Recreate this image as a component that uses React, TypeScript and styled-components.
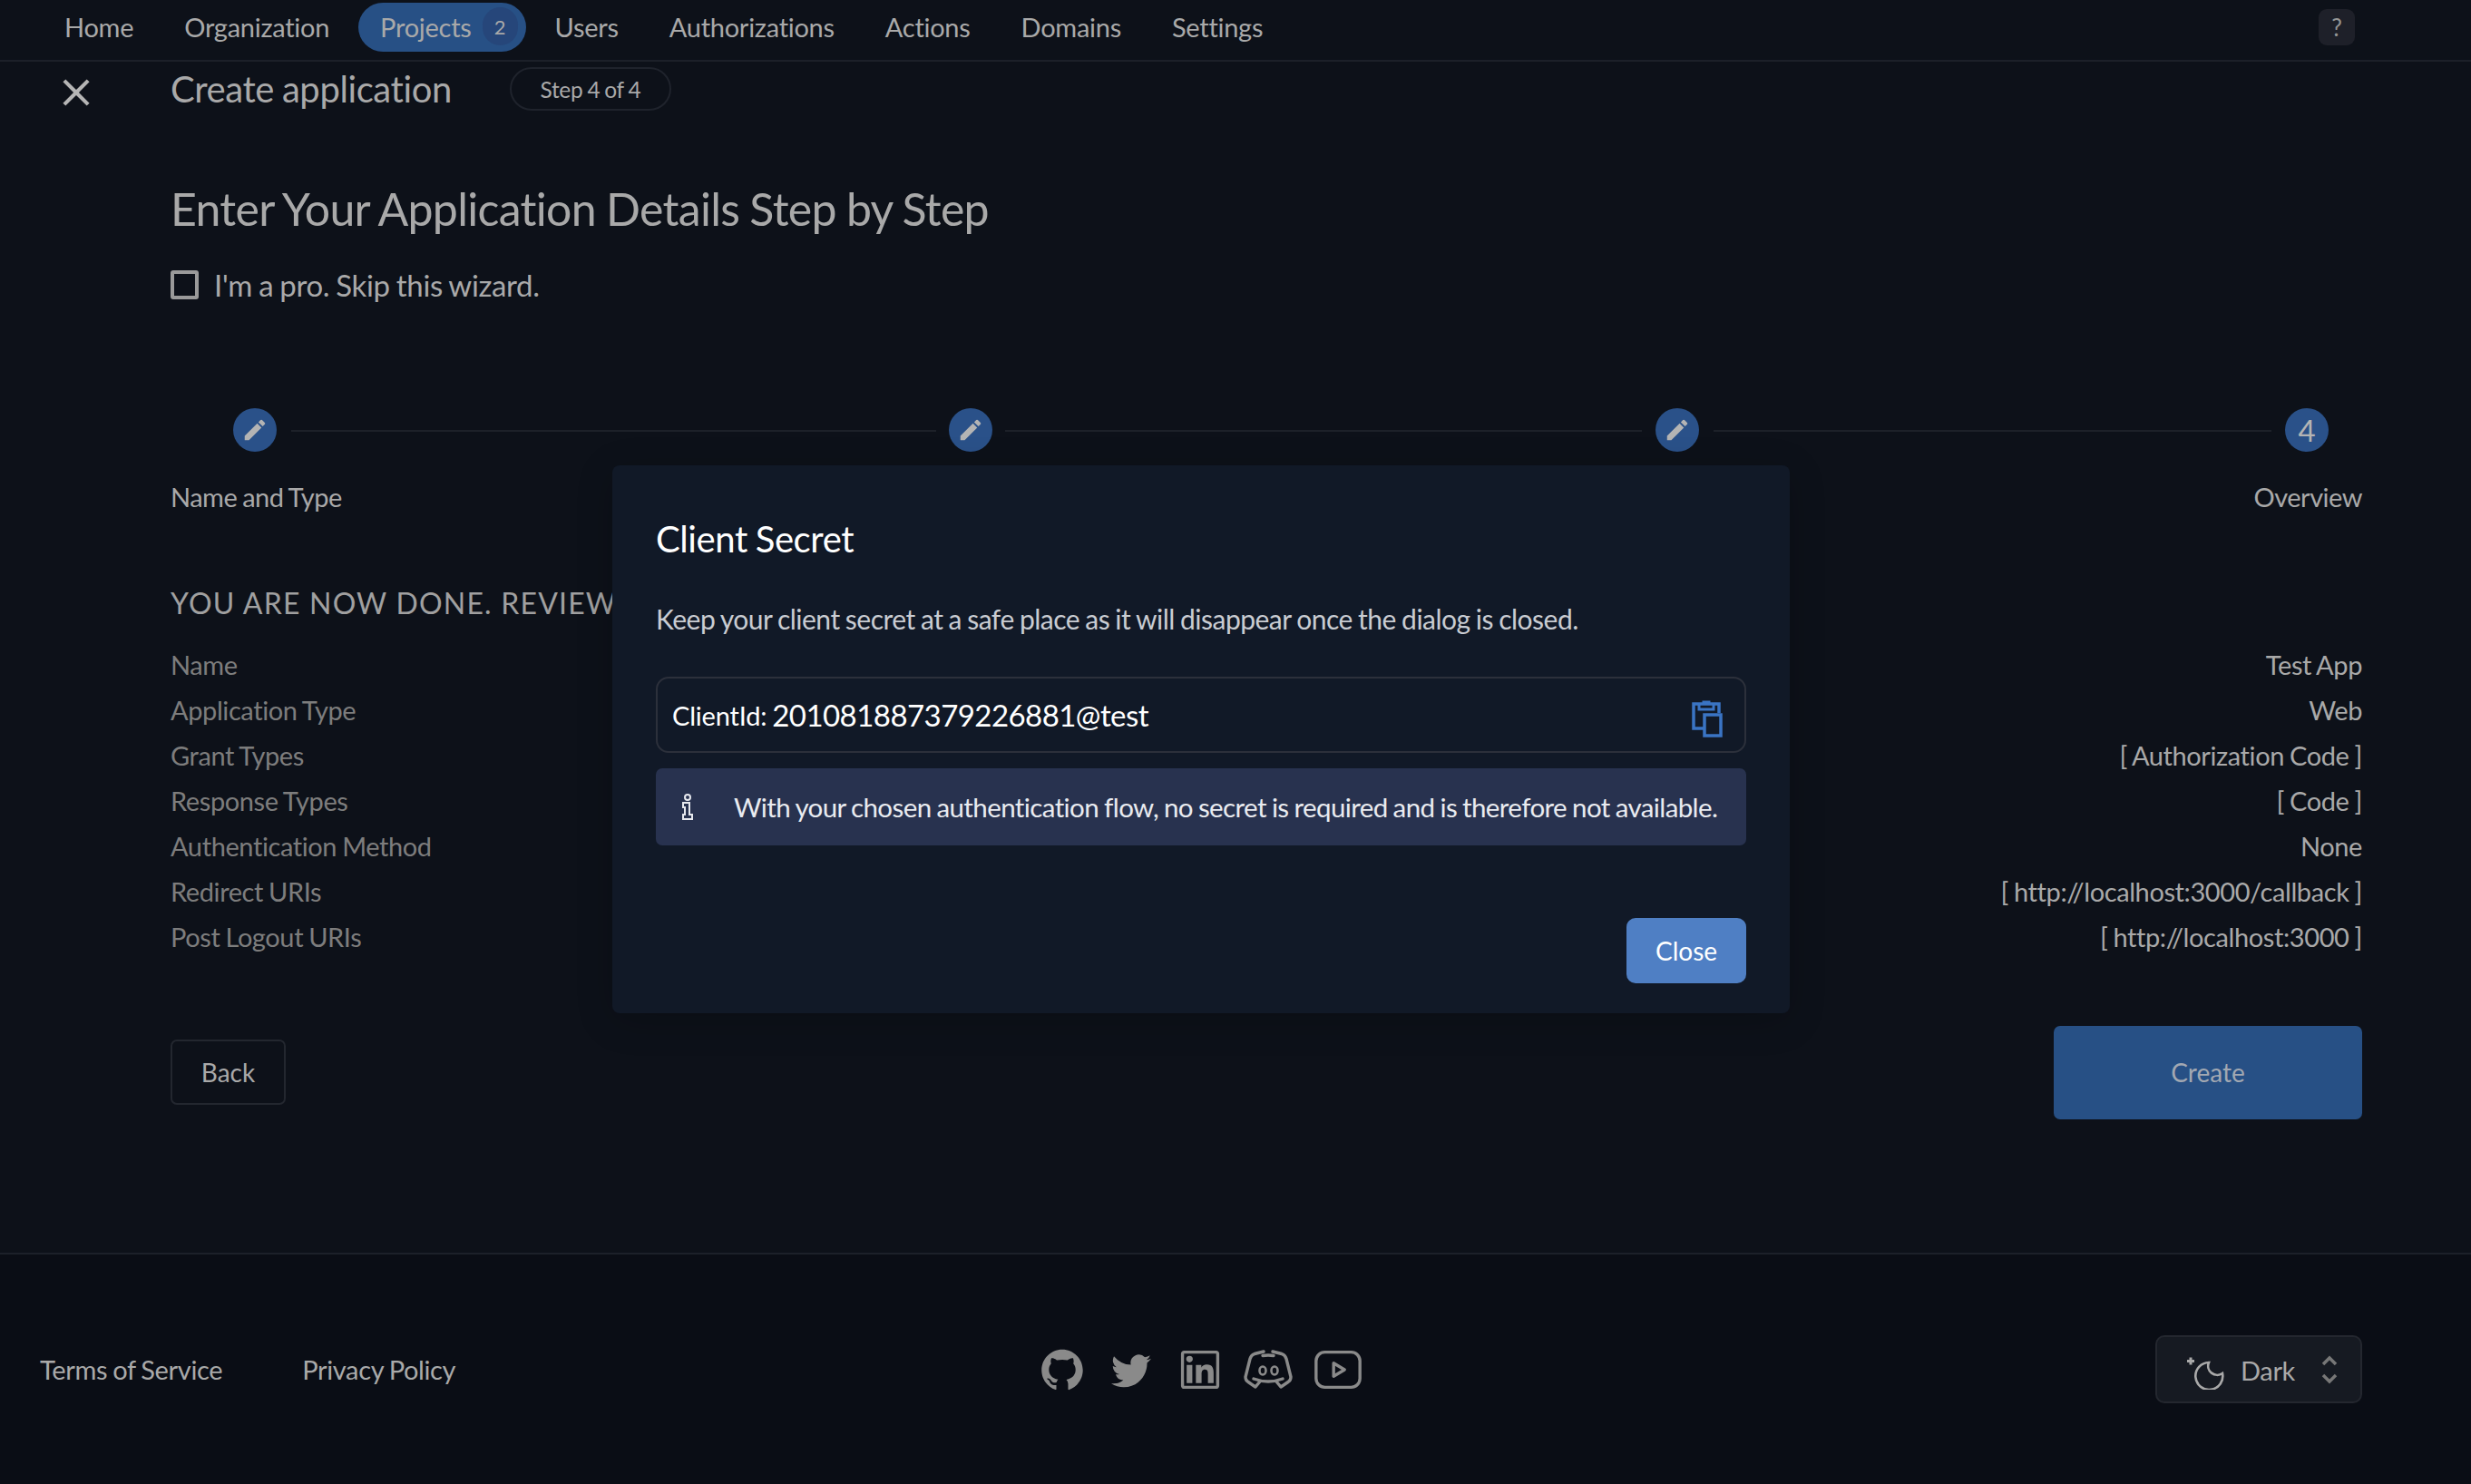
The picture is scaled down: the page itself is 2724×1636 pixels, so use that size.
import styled, { createGlobalStyle } from 'styled-components'
import { MdClose, MdEdit } from 'react-icons/md'
import { AiFillGithub, AiOutlineLinkedin } from 'react-icons/ai'
import { BsTwitter } from 'react-icons/bs'
import { TbBrandYoutube } from 'react-icons/tb'

const navItems = ['Home', 'Organization', 'Projects', 'Users', 'Authorizations', 'Actions', 'Domains', 'Settings']

const reviewRows = [
  ['Name', 'Test App'],
  ['Application Type', 'Web'],
  ['Grant Types', '[ Authorization Code ]'],
  ['Response Types', '[ Code ]'],
  ['Authentication Method', 'None'],
  ['Redirect URIs', '[ http://localhost:3000/callback ]'],
  ['Post Logout URIs', '[ http://localhost:3000 ]'],
]

const GlobalStyle = createGlobalStyle`
  html, body {
    margin: 0;
    padding: 0;
    background: #0d1119;
  }
  * {
    box-sizing: border-box;
  }
  body {
    font-family: Lato, "Open Sans", sans-serif;
    color: #a9a9a9;
    word-spacing: -1px;
  }
`

export default function App() {
  return (
    <Page>
      <GlobalStyle />
      <Header>
        <Nav>
          {navItems.map((item) => (
            <NavItem key={item} $active={item === 'Projects'}>
              {item}
              {item === 'Projects' && <NavBadge>2</NavBadge>}
            </NavItem>
          ))}
        </Nav>
        <HelpButton>?</HelpButton>
      </Header>

      <Main>
        <TitleBar>
          <CloseIcon>
            <MdClose size={50} />
          </CloseIcon>
          <PageTitle>Create application</PageTitle>
          <StepBadge>Step 4 of 4</StepBadge>
        </TitleBar>

        <Content>
          <Heading>Enter Your Application Details Step by Step</Heading>
          <CheckRow>
            <CheckBox />
            I'm a pro. Skip this wizard.
          </CheckRow>

          <Stepper>
            <StepCircleRow>
              <StepCircle $center={93}>
                <MdEdit size={30} />
              </StepCircle>
              <StepLine $left={133} $width={711} />
              <StepCircle $center={882}>
                <MdEdit size={30} />
              </StepCircle>
              <StepLine $left={920} $width={702} />
              <StepCircle $center={1661}>
                <MdEdit size={30} />
              </StepCircle>
              <StepLine $left={1701} $width={615} />
              <StepCircle $center={2355}>4</StepCircle>
            </StepCircleRow>
            <StepLabels>
              <span>Name and Type</span>
              <span>Overview</span>
            </StepLabels>
          </Stepper>

          <SectionTitle>You are now done. Review your configuration</SectionTitle>
          <ReviewList>
            {reviewRows.map(([label, value]) => (
              <ReviewRow key={label}>
                <ReviewLabel>{label}</ReviewLabel>
                <ReviewValue>{value}</ReviewValue>
              </ReviewRow>
            ))}
          </ReviewList>

          <Actions>
            <BackButton>Back</BackButton>
            <CreateButton>Create</CreateButton>
          </Actions>
        </Content>
      </Main>

      <Footer>
        <FooterLinks>
          <span>Terms of Service</span>
          <span>Privacy Policy</span>
        </FooterLinks>
        <Socials>
          <SocialSlot>
            <AiFillGithub size={52} />
          </SocialSlot>
          <SocialSlot>
            <BsTwitter size={44} />
          </SocialSlot>
          <SocialSlot>
            <AiOutlineLinkedin size={54} />
          </SocialSlot>
          <SocialSlot>
            <svg width="70" height="60" viewBox="0 0 70 60" fill="none" stroke="currentColor" strokeWidth="3.4" strokeLinecap="round" strokeLinejoin="round">
              <path d="M29 10L19 12.500Q15 14 14 18L9 38Q9 42 12 43.500L20 49L25 43" />
              <path d="M39 10L49 12.500Q53 14 54 18L59 38Q59 42 56 43.500L48 49L43 43" />
              <path d="M28 14.500Q34 13.500 40 14.500" />
              <path d="M18 40Q34 46 50 40" />
              <ellipse cx="28" cy="31" rx="3.500" ry="4.500" strokeWidth="2.6" />
              <ellipse cx="41" cy="31" rx="3.500" ry="4.500" strokeWidth="2.6" />
            </svg>
          </SocialSlot>
          <SocialSlot>
            <TbBrandYoutube size={58} strokeWidth={1.4} />
          </SocialSlot>
        </Socials>
        <ThemeSelect>
          <svg width="44" height="44" viewBox="0 0 44 44" fill="none" stroke="#a9a9a9" strokeWidth="2.6">
            <path d="M25 14A15 15 0 1 0 40 26A10 10 0 0 1 25 14z" />
            <path d="M5 8.500v8M1 12.500h8" strokeWidth="3" />
          </svg>
          <ThemeName>Dark</ThemeName>
          <svg width="20" height="34" viewBox="0 0 20 34" fill="none" stroke="#777" strokeWidth="3.500">
            <path d="M3 11l7-7 7 7M3 23l7 7 7-7" />
          </svg>
        </ThemeSelect>
      </Footer>

      <Modal>
        <ModalTitle>Client Secret</ModalTitle>
        <ModalText>Keep your client secret at a safe place as it will disappear once the dialog is closed.</ModalText>
        <ClientIdBox>
          <ClientIdLabel>ClientId:</ClientIdLabel>
          <ClientIdValue>201081887379226881@test</ClientIdValue>
          <ClipboardIcon width="34" height="42" viewBox="0 0 34 42" fill="none" stroke="#3a74c4" strokeWidth="3.500">
            <path d="M13 32H2V5h28v10" />
            <path d="M8 5v6h16V5M13 5V3h6v2" strokeWidth="3" />
            <rect x="14" y="17" width="18" height="23" />
          </ClipboardIcon>
        </ClientIdBox>
        <InfoBox>
          <svg width="14" height="30" viewBox="0 0 14 30" fill="none" stroke="#e6e8ee" strokeWidth="2">
            <circle cx="7" cy="4" r="3" />
            <path d="M2 10h7v13h3v5H2v-5h2v-8H2z" />
          </svg>
          <span>With your chosen authentication flow, no secret is required and is therefore not available.</span>
        </InfoBox>
        <ModalActions>
          <CloseButton>Close</CloseButton>
        </ModalActions>
      </Modal>
    </Page>
  )
}

const Page = styled.div`
  position: relative;
  width: 2724px;
  height: 1636px;
  display: flex;
  flex-direction: column;
  overflow: hidden;
  background: #0d1119;
`

const Header = styled.header`
  height: 68px;
  flex-shrink: 0;
  padding: 3px 128px 0 47px;
  display: flex;
  justify-content: space-between;
  border-bottom: 2px solid #1c2029;
`

const Nav = styled.nav`
  display: flex;
  gap: 8px;
  height: 54px;
`

const NavItem = styled.div<{ $active?: boolean }>`
  display: flex;
  align-items: center;
  padding: 0 ${(p) => (p.$active ? '9px' : '24px')} 2px 24px;
  border-radius: 27px;
  font-size: 29px;
  letter-spacing: -0.27px;
  color: #a9a9a9;
  background: ${(p) => (p.$active ? '#275085' : 'transparent')};
`

const NavBadge = styled.span`
  width: 39px;
  height: 42px;
  margin-left: 12px;
  border-radius: 21px;
  background: #26467a;
  display: flex;
  align-items: center;
  justify-content: center;
  font-size: 22px;
`

const HelpButton = styled.div`
  width: 40px;
  height: 40px;
  margin-top: 7px;
  border-radius: 9px;
  background: #1e2029;
  color: #949494;
  font-size: 26px;
  display: flex;
  align-items: center;
  justify-content: center;
`

const Main = styled.main`
  height: 1315px;
  flex-shrink: 0;
  border-bottom: 2px solid #1c2029;
  padding: 6px 120px 0 59px;
`

const TitleBar = styled.div`
  display: flex;
  align-items: center;
  height: 48px;
`

const CloseIcon = styled.span`
  width: 129px;
  display: flex;
  margin-top: 8px;
  color: #b5b5b5;
`

const PageTitle = styled.h2`
  margin: 0;
  font-size: 40px;
  font-weight: 400;
  letter-spacing: -0.4px;
  color: #a9a9a9;
`

const StepBadge = styled.span`
  margin-left: 64px;
  width: 178px;
  height: 48px;
  border: 2px solid #1f232c;
  border-radius: 24px;
  display: flex;
  align-items: center;
  justify-content: center;
  font-size: 24.500px;
  letter-spacing: -0.3px;
`

const Content = styled.div`
  padding-left: 129px;
`

const Heading = styled.h1`
  margin: 76px 0 0;
  font-size: 50px;
  line-height: 64px;
  font-weight: 400;
  letter-spacing: -0.7px;
  color: #a9a9a9;
`

const CheckRow = styled.label`
  display: flex;
  align-items: center;
  gap: 17px;
  margin-top: 32px;
  font-size: 33px;
  letter-spacing: -0.35px;
  line-height: 40px;
`

const CheckBox = styled.span`
  width: 31px;
  height: 32px;
  border: 4px solid #9a9a9a;
  border-radius: 3px;
`

const Stepper = styled.div`
  margin-top: 116px;
`

const StepCircleRow = styled.div`
  position: relative;
  height: 48px;
`

const StepCircle = styled.div<{ $center: number }>`
  position: absolute;
  top: 0;
  left: ${(p) => p.$center - 24}px;
  width: 48px;
  height: 48px;
  border-radius: 50%;
  background: #2a5189;
  color: #b4b4b4;
  font-size: 33px;
  display: flex;
  align-items: center;
  justify-content: center;
`

const StepLine = styled.div<{ $left: number; $width: number }>`
  position: absolute;
  top: 24px;
  left: ${(p) => p.$left}px;
  width: ${(p) => p.$width}px;
  height: 2px;
  background: #1d2129;
`

const StepLabels = styled.div`
  margin-top: 32px;
  display: flex;
  justify-content: space-between;
  font-size: 29px;
  line-height: 36px;
  letter-spacing: -0.5px;
`

const SectionTitle = styled.h3`
  margin: 79px 0 0;
  font-size: 32px;
  line-height: 40px;
  font-weight: 400;
  letter-spacing: 1.2px;
  word-spacing: 0;
  text-transform: uppercase;
  color: #a0a0a0;
`

const ReviewList = styled.div`
  margin-top: 22px;
  display: flex;
  flex-direction: column;
`

const ReviewRow = styled.div`
  height: 50.100px;
  display: flex;
  justify-content: space-between;
  align-items: center;
  font-size: 29px;
  letter-spacing: -0.4px;
`

const ReviewLabel = styled.span`
  color: #7d7d7d;
`

const ReviewValue = styled.span`
  color: #a9a9a9;
`

const Actions = styled.div`
  margin-top: 73px;
  display: flex;
  justify-content: space-between;
  align-items: center;
`

const BackButton = styled.div`
  width: 127px;
  height: 72px;
  border: 2px solid #23272f;
  border-radius: 7px;
  display: flex;
  align-items: center;
  justify-content: center;
  font-size: 28px;
`

const CreateButton = styled.div`
  width: 340px;
  height: 103px;
  border-radius: 7px;
  background: #275085;
  color: #a2a8b2;
  display: flex;
  align-items: center;
  justify-content: center;
  font-size: 28px;
`

const Footer = styled.footer`
  flex: 1;
  background: #0a0d15;
  padding: 0 120px 0 44px;
  display: flex;
  align-items: center;
  font-size: 29px;
  letter-spacing: -0.35px;
  color: #a9a9a9;
`

const FooterLinks = styled.div`
  display: flex;
  gap: 88px;
  width: 1089px;
`

const Socials = styled.div`
  display: flex;
  align-items: center;
  color: #8a8a8a;
`

const SocialSlot = styled.span`
  width: 76px;
  height: 60px;
  display: flex;
  justify-content: center;
  align-items: center;
`

const ThemeSelect = styled.div`
  width: 228px;
  height: 75px;
  margin-left: auto;
  padding: 0 24px 0 32px;
  border: 2px solid #24272f;
  border-radius: 10px;
  background: #161a22;
  display: flex;
  align-items: center;
`

const ThemeName = styled.span`
  margin: 2px auto 0 16px;
`

const Modal = styled.section`
  position: absolute;
  left: 675px;
  top: 513px;
  width: 1298px;
  height: 604px;
  padding: 50px 48px 0;
  border-radius: 8px;
  background: #111927;
  box-shadow: 0 8px 40px rgba(0, 0, 0, 0.2);
  color: #fff;
  display: flex;
  flex-direction: column;
`

const ModalTitle = styled.h2`
  margin: 0;
  font-size: 40px;
  line-height: 62px;
  font-weight: 400;
  letter-spacing: -0.4px;
`

const ModalText = styled.p`
  margin: 37px 0 0;
  font-size: 30px;
  line-height: 40px;
  letter-spacing: -0.5px;
  color: #c9ccd2;
`

const ClientIdBox = styled.div`
  margin-top: 44px;
  height: 84px;
  padding: 0 24px 0 16px;
  border: 2px solid #2c303b;
  border-radius: 14px;
  display: flex;
  align-items: center;
  gap: 6px;
`

const ClientIdLabel = styled.span`
  font-size: 29px;
  letter-spacing: -0.2px;
`

const ClientIdValue = styled.span`
  font-size: 33px;
  letter-spacing: -0.55px;
`

const ClipboardIcon = styled.svg`
  margin-left: auto;
  margin-top: 8px;
`

const InfoBox = styled.div`
  margin-top: 17px;
  height: 85px;
  padding: 0 0 0 28px;
  border-radius: 7px;
  background: #28324f;
  display: flex;
  align-items: center;
  gap: 44px;
  font-size: 29.500px;
  letter-spacing: -0.6px;
  color: #e9ebf0;
`

const ModalActions = styled.div`
  margin-top: 80px;
  display: flex;
  justify-content: flex-end;
`

const CloseButton = styled.div`
  width: 132px;
  height: 72px;
  border-radius: 10px;
  background: #4f7fc4;
  color: #fff;
  display: flex;
  align-items: center;
  justify-content: center;
  font-size: 28px;
`
